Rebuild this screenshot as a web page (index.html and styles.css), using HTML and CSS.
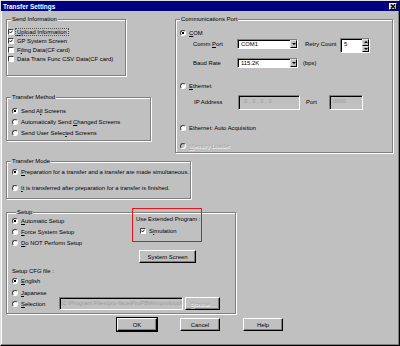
FILE: index.html
```html
<!DOCTYPE html>
<html lang="en">
<head>
  <meta charset="UTF-8">
  <meta name="viewport" content="width=device-width, initial-scale=1.0">
  <title>Transfer Settings</title>
  <link rel="stylesheet" href="styles.css">
</head>
<body>

<div class="dialog">
  <header class="titlebar">
    <span class="title">Transfer Settings</span>
    <span class="close"><svg viewBox="0 0 6 5"><path d="M1 .5l4 4M5 .5l-4 4"></path></svg></span>
  </header>

  <div class="content">
    <div class="top">
      <div class="col-left">
        <div class="group send-info">
          <span class="legend">Send Information</span>
          <div class="rows">
            <div class="opt check"><span class="box"><svg class="tick" viewBox="0 0 4 4"><path d="M.4 1.7l1.2 1.3L3.6.6"></path></svg></span><span class="focus"><u>U</u>pload Information</span></div>
            <div class="opt check"><span class="box"><svg class="tick" viewBox="0 0 4 4"><path d="M.4 1.7l1.2 1.3L3.6.6"></path></svg></span><span>GP System Screen</span></div>
            <div class="opt check"><span class="box"></span><span>F<u>i</u>ling Data(CF card)</span></div>
            <div class="opt check"><span class="box"></span><span>Data Trans Func CSV Data(CF card)</span></div>
          </div>
        </div>

        <div class="group method">
          <span class="legend">Transfer Method</span>
          <div class="rows">
            <div class="opt radio on"><span class="dot"></span><span>Send A<u>l</u>l Screens</span></div>
            <div class="opt radio"><span class="dot"></span><span>Automatically Send <u>C</u>hanged Screens</span></div>
            <div class="opt radio"><span class="dot"></span><span>Send User Selec<u>t</u>ed Screens</span></div>
          </div>
        </div>
      </div>

      <div class="group comm">
        <span class="legend">Communications Port</span>
        <div class="rows">
          <div class="opt radio on row-com"><span class="dot"></span><span><u>C</u>OM</span></div>
          <div class="field-row row-port">
            <span class="field-label">Comm <u>P</u>ort</span>
            <span class="combo"><span>COM1</span><span class="combo-btn"></span></span>
            <span class="retry-label">Retry Count</span>
            <span class="spin"><span>5</span><span class="spin-btns"><span class="spin-up"></span><span class="spin-down"></span></span></span>
          </div>
          <div class="field-row row-baud">
            <span class="field-label">Baud Rate</span>
            <span class="combo"><span>115.2K</span><span class="combo-btn"></span></span>
            <span class="unit">(bps)</span>
          </div>
          <div class="opt radio row-eth"><span class="dot"></span><span><u>E</u>thernet</span></div>
          <div class="field-row row-ip">
            <span class="field-label ip-label">IP Address</span>
            <span class="field disabled ip-field">0 . 0 . 0 . 0</span>
            <span class="port-label">Port</span>
            <span class="field disabled port-field">0000</span>
          </div>
          <div class="opt radio row-auto"><span class="dot"></span><span>Ethernet: Auto Acquisition</span></div>
          <div class="opt radio disabled row-mem"><span class="dot"></span><span><u>M</u>emory Loader</span></div>
        </div>
      </div>
    </div>

    <div class="group mode">
      <span class="legend">Transfer Mode</span>
      <div class="rows">
        <div class="opt radio on"><span class="dot"></span><span><u>P</u>reparation for a transfer and a transfer are made simultaneous.</span></div>
        <div class="opt radio"><span class="dot"></span><span><u>I</u>t is transferred after preparation for a transfer is finished.</span></div>
      </div>
    </div>

    <div class="group setup">
      <span class="legend">Setup</span>
      <div class="setup-top">
        <div class="setup-modes">
          <div class="opt radio on"><span class="dot"></span><span><u>A</u>utomatic Setup</span></div>
          <div class="opt radio"><span class="dot"></span><span><u>F</u>orce System Setup</span></div>
          <div class="opt radio"><span class="dot"></span><span><u>D</u>o NOT Perform Setup</span></div>
        </div>
        <div class="ext-program">
          <span class="ext-label">Use Extended Program :</span>
          <div class="opt check"><span class="box"><svg class="tick" viewBox="0 0 4 4"><path d="M.4 1.7l1.2 1.3L3.6.6"></path></svg></span><span>S<u>i</u>mulation</span></div>
          <button class="btn sys-btn">System Screen</button>
          <span class="highlight"></span>
        </div>
      </div>
      <div class="cfg-label">Setup CFG file :</div>
      <div class="opt radio on cfg-en"><span class="dot"></span><span><u>E</u>nglish</span></div>
      <div class="opt radio cfg-jp"><span class="dot"></span><span><u>J</u>apanese</span></div>
      <div class="sel-row">
        <div class="opt radio sel-label"><span class="dot"></span><span><u>S</u>election</span></div>
        <span class="field disabled path-field">C:\Program Files\pro-face\ProPBWin\protocol\</span>
        <button class="btn disabled browse-btn"><u>B</u>rowse...</button>
      </div>
    </div>

    <div class="buttons">
      <button class="btn default">OK</button>
      <button class="btn">Cancel</button>
      <button class="btn">Help</button>
    </div>
  </div>
</div>

</body>
</html>
```

FILE: styles.css
```css
/* === Reset === */
*, *::before, *::after { box-sizing: border-box; }
body {
  background: #c0c0c0;
  color: #000;
  font-family: "Liberation Sans", Arial, sans-serif;
  font-size: 5.9px;
  margin: 0;
}
u { text-underline-offset: 1px; }

/* === Window === */
.dialog {
  --face: #c0c0c0;
  --shadow: #808080;
  --dark: #404040;

  background: var(--face);
  border: 1px solid;
  border-color: #dfdfdf #000 #000 #dfdfdf;
  box-shadow: inset -1px -1px var(--shadow), inset 1px 1px #fff;
  display: flex;
  flex-direction: column;
  height: 346px;
  width: 400px;
}
.titlebar {
  align-items: center;
  background: #000080;
  color: #fff;
  display: flex;
  height: 10px;
  justify-content: space-between;
  padding: 0 2px 0 2px;
}
.title {
  font-size: 6.4px;
  font-weight: bold;
}
.close {
  background: var(--face);
  border: 1px solid;
  border-color: #fff #000 #000 #fff;
  display: grid;
  height: 7px;
  margin-top: 1px;
  place-items: center;
  width: 8px;
}
.close svg {
  fill: none;
  height: 5px;
  stroke: #000;
  stroke-width: 1.2;
  width: 6px;
}
.content {
  display: flex;
  flex-direction: column;
  padding: 8px 0 0 5px;
}

/* === Group boxes === */
.group {
  border: 1px solid var(--shadow);
  box-shadow: inset 1px 1px #fff, 1px 1px #fff;
}
.legend {
  background: var(--face);
  display: block;
  line-height: 9px;
  margin: -5px 0 0 4px;
  padding: 0 1px;
  width: max-content;
}
.rows { display: flex; flex-direction: column; }

.top { align-items: flex-start; display: flex; }
.col-left { display: flex; flex-direction: column; width: 145px; }

.send-info { height: 57px; width: 120px; }
.send-info .rows { padding: 3px 0 0 1px; }
.send-info .opt { height: 9px; }

.method { height: 44px; margin-top: 21px; width: 145px; }
.method .rows { padding: 3px 0 0 5px; }
.method .opt { height: 11px; }

.comm { height: 134px; margin-left: 24px; width: 218px; }
.comm .rows { padding: 4px 0 0 4px; }
.comm .opt { height: 10px; }
.row-port { height: 15px; margin-top: 0; }
.row-baud { height: 10px; margin-top: 5px; }
.row-eth { margin-top: 13px; }
.row-ip { height: 15px; margin-top: 4px; }
.row-auto { margin-top: 13px; }
.row-mem { margin-top: 8px; }

.mode { height: 38px; margin-top: 8px; width: 185px; }
.mode .rows { padding: 1px 0 0 5px; }
.mode .opt { height: 10px; }
.mode .opt + .opt { margin-top: 6px; }

.setup { height: 102px; margin-top: 13px; padding-left: 5px; width: 230px; }
.setup .opt { height: 8px; }
.setup-top { display: flex; height: 46px; }
.setup-modes { display: flex; flex-direction: column; gap: 3px; width: 124px; }
.ext-program {
  display: flex;
  flex-direction: column;
  margin-top: -2px;
  position: relative;
}
.ext-label { line-height: 8px; }
.ext-program .opt { margin: 4px 0 0 4px; }
.sys-btn { height: 13px; margin: 15px 0 0 3px; width: 57px; }
.highlight { /* red annotation frame drawn over the dialog */
  border: 1.5px solid #e8141c;
  height: 34px;
  left: -4px;
  position: absolute;
  top: -7px;
  width: 70px;
}
.cfg-label { line-height: 8px; margin-top: 4px; }
.cfg-en { margin-top: 2px; }
.cfg-jp { margin-top: 4px; }
.sel-row { align-items: center; display: flex; height: 13px; margin-top: 0; }
.sel-row .sel-label { width: 47px; }
.path-field { height: 13px; width: 124px; }
.browse-btn { height: 13px; margin-left: 2px; width: 35px; }

.buttons { display: flex; gap: 23px; margin-top: 4px; padding-left: 111px; }
.buttons .btn { height: 13px; width: 40px; }

/* === Options === */
.opt { align-items: center; display: flex; gap: 3px; white-space: nowrap; }
.opt.disabled { color: #a4a4a4; text-shadow: .5px .5px #fff; }
.focus { outline: 1px dotted #555; outline-offset: 0; padding: 0 1px; margin-left: -1px; }

.box, .dot {
  background: #fff;
  border: 1px solid;
  border-color: var(--dark) #fff #fff var(--dark);
  display: grid;
  flex: none;
  height: 6px;
  place-items: center;
  width: 6px;
}
.dot { border-radius: 50%; }
.radio.on .dot { background: radial-gradient(circle, #000 0 1px, #fff 1.4px); }
.radio.disabled .dot { background: var(--face); }
.tick {
  fill: none;
  height: 4px;
  stroke: #000;
  stroke-width: .9;
  width: 4px;
}

/* === Fields === */
.field-row { align-items: flex-start; display: flex; }
.field-label { line-height: 10px; margin-left: 13px; width: 44px; }
.row-port .field-label, .row-port .combo, .row-port .retry-label { margin-top: 1px; }
.retry-label { line-height: 10px; margin-left: 7px; width: 35px; }
.unit { line-height: 10px; margin-left: 5px; }
.ip-label { line-height: 15px; margin-left: 14px; }
.port-label { line-height: 15px; margin-left: 6px; width: 23px; }

.combo, .spin, .field {
  background: #fff;
  border: 1px solid;
  border-color: var(--shadow) #fff #fff var(--shadow);
  box-shadow: inset 1px 1px #000;
  display: flex;
  overflow: hidden;
  white-space: nowrap;
}
.combo { align-items: center; height: 10px; padding-left: 3px; width: 61px; }
.combo-btn, .spin-up, .spin-down {
  align-items: center;
  background: var(--face);
  border: 1px solid;
  border-color: #dfdfdf #000 #000 #dfdfdf;
  display: flex;
  justify-content: center;
}
.combo-btn { align-self: stretch; margin-left: auto; width: 7px; }
.combo-btn::before, .spin-down::before, .spin-up::before {
  border-left: 2px solid transparent;
  border-right: 2px solid transparent;
  content: "";
}
.combo-btn::before, .spin-down::before { border-top: 2px solid #000; }
.spin-up::before { border-bottom: 2px solid #000; }

.spin { height: 15px; line-height: 8px; margin-left: 0; padding: 1px 0 0 3px; width: 30px; }
.spin-btns { display: flex; flex-direction: column; margin: -1px 0 0 auto; width: 7px; }
.spin-up, .spin-down { flex: 1; }

.field { align-items: flex-start; line-height: 9px; padding: 1px 0 0 3px; }
.field.disabled { background: var(--face); color: #9c9c9c; }
.ip-field { height: 15px; width: 62px; padding-left: 5px; }
.port-field { height: 15px; width: 34px; }
.path-field { align-items: center; padding: 0 0 0 2px; }

/* === Buttons === */
.btn {
  background: var(--face);
  border: 1px solid;
  border-color: #fff #000 #000 #fff;
  box-shadow: inset -1px -1px var(--shadow);
  color: #000;
  font: inherit;
  padding: 0;
}
.btn.default { outline: 1px solid #000; }
.btn.disabled { color: #a4a4a4; text-shadow: .5px .5px #fff; }
```
